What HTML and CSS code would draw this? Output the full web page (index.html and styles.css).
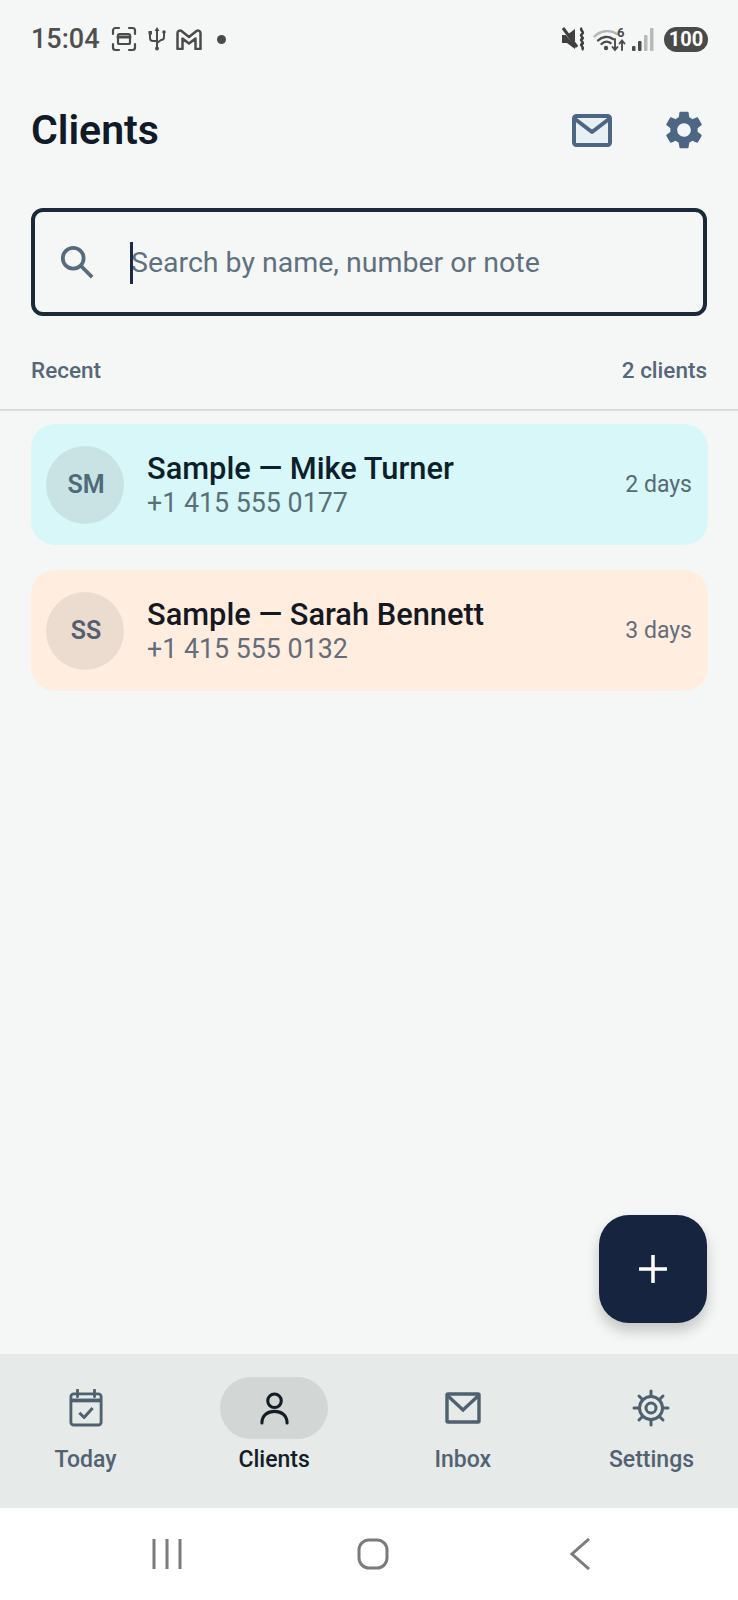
FILE: index.html
```html
<!DOCTYPE html>
<html lang="en">
<head>
  <meta charset="UTF-8">
  <title>Clients</title>
  <link rel="stylesheet" href="styles.css">
</head>
<body>
  <div class="screen">
    <div class="status">
      <div class="status-left">
        <span class="clock">15:04</span>
        <svg class="s-shot" width="26" height="26" viewBox="0 0 26 26" fill="none" stroke="#4b4b4b" stroke-width="2.200" stroke-linecap="round">
          <path d="M2 8V4.500A2.500 2.500 0 0 1 4.500 2H8M18 2h3.500A2.500 2.500 0 0 1 24 4.500V8M24 18v3.500a2.500 2.500 0 0 1-2.500 2.500H18M8 24H4.500A2.500 2.500 0 0 1 2 21.500V18"/>
          <rect x="7" y="8" width="12" height="10" rx="1.500"/>
          <path d="M7 11h12" stroke-width="3"/>
        </svg>
        <svg class="s-usb" width="18" height="24" viewBox="0 0 18 24" fill="none" stroke="#4b4b4b" stroke-width="2">
          <path d="M9 3v19M2 7v4c0 2 1 3 3 3h4M16 6v4c0 2-1 3-3 3l-4 3"/>
          <path d="M9 0l2.500 4h-5z" fill="#4b4b4b" stroke="none"/>
          <rect x="0.500" y="4" width="3.500" height="3.500" fill="#4b4b4b" stroke="none"/>
          <circle cx="16" cy="5" r="1.800" fill="#4b4b4b" stroke="none"/>
          <circle cx="9" cy="21.500" r="2" fill="#4b4b4b" stroke="none"/>
        </svg>
        <svg class="s-gmail" width="26" height="21" viewBox="0 0 26 21" fill="none" stroke="#4b4b4b" stroke-width="2.500" stroke-linejoin="round">
          <path d="M1.500 4a2.500 2.500 0 0 1 4-2L13 8l7.500-6a2.500 2.500 0 0 1 4 2v16h-5V9.500L13 14.500 6.500 9.500V20h-5z"/>
        </svg>
        <span class="s-dot"></span>
      </div>
      <div class="status-right">
        <svg width="25" height="24" viewBox="0 0 25 24" fill="none" stroke="#3f3f3f">
          <path d="M1 8h5l8-6v20l-8-6H1z" fill="#3f3f3f" stroke="none"/>
          <path d="M0.500 1.500L16 19" stroke="#f4f7f5" stroke-width="2.500"/>
          <path d="M2 1l14 19" stroke-width="3"/>
          <path d="M21 1c-3 2 3 4 0 6s3 4 0 5 3 4 0 5 3 3 0 6" stroke-width="2.500"/>
        </svg>
        <svg class="s-wifi" width="32" height="25" viewBox="0 0 32 25" fill="none" stroke-linecap="round">
          <path d="M1.500 9.500C7 4 17 2 24 7" stroke="#b5b5b5" stroke-width="2.400"/>
          <path d="M5 13.500c4-4 10-5 15-1.500" stroke="#4b4b4b" stroke-width="2.400"/>
          <path d="M8.500 17c2.500-2.500 6-3 9-1" stroke="#4b4b4b" stroke-width="2.400"/>
          <circle cx="13" cy="21" r="2.200" fill="#4b4b4b"/>
          <path d="M22 12v11M19.500 20l2.500 3 2.500-3M29 23V14M26.500 16.500L29 13.500l2.500 3" stroke="#4b4b4b" stroke-width="1.900"/>
          <text x="24" y="10" class="wifi-six">6</text>
        </svg>
        <svg class="s-signal" width="22" height="24" viewBox="0 0 22 24">
          <rect x="0" y="19" width="3.500" height="5" rx="1" fill="#4b4b4b"/>
          <rect x="6" y="14" width="3.500" height="10" rx="1" fill="#4b4b4b"/>
          <rect x="12" y="8" width="3.500" height="16" rx="1" fill="#b8b8b8"/>
          <rect x="18" y="1" width="3.500" height="23" rx="1" fill="#b8b8b8"/>
        </svg>
        <span class="battery">100</span>
      </div>
    </div>

    <header class="top">
      <h1>Clients</h1>
      <div class="top-icons">
        <svg width="40" height="33" viewBox="0 0 40 33" fill="none" stroke="#4c6684" stroke-width="4" stroke-linejoin="round">
          <rect x="2" y="2" width="36" height="29" rx="2.500" fill="#e9f0f4"/>
          <path d="M3 5l17 13L37 5"/>
        </svg>
        <svg width="38" height="38" viewBox="2 2 20 20">
          <path fill="#4c6684" d="M19.140 12.940c.04-.3.060-.61.060-.94 0-.32-.020-.64-.070-.94l2.030-1.580a.49.49 0 0 0 .12-.61l-1.920-3.320a.49.49 0 0 0-.59-.22l-2.390.96c-.5-.38-1.030-.7-1.620-.94l-.36-2.540a.484.484 0 0 0-.48-.41h-3.840c-.24 0-.43.170-.47.410l-.36 2.540c-.59.24-1.130.57-1.620.94l-2.390-.96c-.22-.08-.47 0-.59.220L2.740 8.870c-.12.210-.08.47.12.610l2.030 1.580c-.05.3-.09.63-.09.94s.020.64.070.94l-2.030 1.580a.49.49 0 0 0-.12.610l1.920 3.320c.12.220.37.290.59.220l2.390-.96c.5.38 1.030.7 1.620.94l.36 2.540c.05.24.24.410.48.410h3.840c.24 0 .44-.17.47-.41l.36-2.540c.59-.24 1.130-.56 1.620-.94l2.390.96c.22.080.47 0 .59-.22l1.920-3.320c.12-.22.070-.47-.12-.61l-2.010-1.580zM12 15.600A3.610 3.610 0 0 1 8.400 12c0-1.980 1.620-3.600 3.600-3.600s3.600 1.620 3.600 3.600-1.620 3.600-3.600 3.600z"/>
        </svg>
      </div>
    </header>

    <div class="search">
      <svg width="34" height="34" viewBox="0 0 36 36" fill="none" stroke="#566b7d" stroke-width="4">
        <circle cx="14" cy="14" r="11"/>
        <path d="M22 22l12 12"/>
      </svg>
      <div class="search-field">
        <span class="caret"></span>
        <span class="placeholder">Search by name, number or note</span>
      </div>
    </div>

    <div class="list-head">
      <span>Recent</span>
      <span>2 clients</span>
    </div>

    <main class="list">
      <div class="card card-blue">
        <div class="avatar">SM</div>
        <div class="card-info">
          <div class="card-name">Sample — Mike Turner</div>
          <div class="card-phone">+1 415 555 0177</div>
        </div>
        <div class="card-days">2 days</div>
      </div>
      <div class="card card-peach">
        <div class="avatar">SS</div>
        <div class="card-info">
          <div class="card-name">Sample — Sarah Bennett</div>
          <div class="card-phone">+1 415 555 0132</div>
        </div>
        <div class="card-days">3 days</div>
      </div>
    </main>

    <button class="fab">
      <svg width="28" height="28" viewBox="0 0 28 28" stroke="#fff" stroke-width="3.500"><path d="M14 0v28M0 14h28"/></svg>
    </button>

    <nav class="tabs">
      <div class="tab">
        <div class="tab-icon">
          <svg width="34" height="38" viewBox="0 0 36 40" fill="none" stroke="#4f6071" stroke-width="3" stroke-linejoin="round">
            <rect x="2" y="5" width="32" height="33" rx="3"/>
            <path d="M2 12h32" stroke-width="4"/>
            <path d="M9 1v7M27 1v7" stroke-linecap="round"/>
            <path d="M11 25l5 5 9-10" stroke-width="3.200"/>
          </svg>
        </div>
        <span>Today</span>
      </div>
      <div class="tab tab-on">
        <div class="tab-icon">
          <svg width="29" height="33" viewBox="0 0 30 34" fill="none" stroke="#141c26" stroke-width="3.200" stroke-linecap="round">
            <circle cx="15" cy="9" r="7"/>
            <path d="M2 32c0-8 6-12 13-12s13 4 13 12"/>
          </svg>
        </div>
        <span>Clients</span>
      </div>
      <div class="tab">
        <div class="tab-icon">
          <svg width="36" height="32" viewBox="0 0 36 32" fill="none" stroke="#4f6071" stroke-width="3.400">
            <rect x="2" y="2" width="32" height="28" rx="1"/>
            <path d="M3 4l15 14L33 4"/>
          </svg>
        </div>
        <span>Inbox</span>
      </div>
      <div class="tab">
        <div class="tab-icon">
          <svg width="38" height="38" viewBox="0 0 38 38" fill="none" stroke="#4f6071" stroke-width="3" stroke-linecap="round">
            <circle cx="19" cy="19" r="11.500"/>
            <circle cx="19" cy="19" r="5"/>
            <path d="M19 2v5M19 31v5M2 19h5M31 19h5M7 7l3.500 3.500M27.500 27.500L31 31M7 31l3.500-3.500M27.500 10.500L31 7"/>
          </svg>
        </div>
        <span>Settings</span>
      </div>
    </nav>

    <div class="sysnav">
      <svg width="30" height="30" viewBox="0 0 30 30" stroke="#7b7b7b" stroke-width="3"><path d="M2 0v30M15 0v30M28 0v30"/></svg>
      <svg class="sys-home" width="32" height="32" viewBox="0 0 32 32" fill="none" stroke="#7b7b7b" stroke-width="3"><rect x="2" y="2" width="28" height="28" rx="10"/></svg>
      <svg class="sys-back" width="20" height="32" viewBox="0 0 20 32" fill="none" stroke="#7b7b7b" stroke-width="3"><path d="M19 1L2 16l17 15"/></svg>
    </div>
  </div>
</body>
</html>
```

FILE: styles.css
```css
* {
  box-sizing: border-box;
}

body {
  margin: 0;
  font-family: Roboto, "Liberation Sans", sans-serif;
  background-color: #f4f7f5;
}

.screen {
  position: relative;
  width: 738px;
  height: 1600px;
  display: flex;
  flex-direction: column;
  overflow: hidden;
}

/* status bar */
.status {
  height: 78px;
  padding: 0 30px 0 31px;
  display: flex;
  justify-content: space-between;
  align-items: center;
}

.status-left,
.status-right {
  display: flex;
  align-items: center;
}

.clock {
  font-size: 27px;
  font-weight: 500;
  color: #4f4f4f;
  width: 80px;
}

.s-usb {
  margin-left: 11px;
}

.s-gmail {
  margin-left: 10px;
}

.s-dot {
  width: 9px;
  height: 9px;
  margin-left: 15px;
  border-radius: 50%;
  background-color: #4b4b4b;
}

.s-wifi {
  margin-left: 7px;
  overflow: visible;
}

.wifi-six {
  font-family: Roboto, sans-serif;
  font-size: 13px;
  font-weight: 700;
  fill: #4b4b4b;
}

.s-signal {
  margin-left: 7px;
}

.battery {
  margin-left: 10px;
  width: 44px;
  height: 25px;
  border-radius: 13px;
  background-color: #4a4a4a;
  color: #fff;
  font-size: 20px;
  font-weight: 700;
  line-height: 25px;
  text-align: center;
}

/* header */
.top {
  height: 60px;
  margin-top: 22px;
  padding: 0 35px 0 31px;
  display: flex;
  justify-content: space-between;
  align-items: center;
}

h1 {
  margin: 0;
  font-size: 41px;
  font-weight: 600;
  color: #101a28;
}

.top-icons {
  display: flex;
  align-items: center;
  gap: 53px;
}

/* search */
.search {
  margin: 48px 31px 0;
  height: 108px;
  padding: 0 25px;
  display: flex;
  align-items: center;
  border: 4px solid #1b2a3a;
  border-radius: 12px;
}

.search-field {
  margin-left: 37px;
  display: flex;
  align-items: center;
  position: relative;
}

.caret {
  position: absolute;
  left: -1px;
  top: -4px;
  width: 3px;
  height: 42px;
  background-color: #1b2a4a;
}

.placeholder {
  font-size: 28.500px;
  color: #5f7180;
}

.list-head {
  margin-top: 40px;
  padding: 0 31px;
  display: flex;
  justify-content: space-between;
  font-size: 22.500px;
  font-weight: 500;
  color: #566778;
  height: 28px;
  line-height: 28px;
}

/* client cards */
.list {
  flex: 1;
  margin-top: 25px;
  border-top: 2px solid #d9dcd8;
  padding: 13px 30px 0 31px;
  display: flex;
  flex-direction: column;
  gap: 25px;
}

.card {
  height: 121px;
  padding: 0 16px 0 15px;
  display: flex;
  align-items: center;
  border-radius: 24px;
}

.card-blue {
  background-color: #d7f7f8;
  color: #0d1f2b;
}

.card-peach {
  background-color: #ffeee0;
  color: #15181f;
}

.avatar {
  width: 78px;
  height: 78px;
  padding-left: 2px;
  border-radius: 50%;
  display: flex;
  align-items: center;
  justify-content: center;
  font-size: 25px;
  font-weight: 600;
  color: #4f6a78;
}

.card-blue .avatar {
  background-color: #c9e3e4;
}

.card-peach .avatar {
  background-color: #ecdcd0;
  color: #565f70;
}

.card-info {
  flex: 1;
  margin-left: 23px;
}

.card-name {
  font-size: 30.800px;
  font-weight: 500;
  line-height: 36px;
}

.card-phone {
  font-size: 26.800px;
  line-height: 32px;
  color: #5a7079;
}

.card-peach .card-phone,
.card-peach .card-days {
  color: #666c78;
}

.card-days {
  font-size: 23px;
  color: #566a74;
}

/* add button */
.fab {
  position: absolute;
  left: 599px;
  top: 1215px;
  width: 108px;
  height: 108px;
  padding: 0;
  display: flex;
  align-items: center;
  justify-content: center;
  border: 0;
  border-radius: 30px;
  background-color: #16243f;
  box-shadow: 0 8px 14px rgba(0, 0, 0, 0.2);
}

/* bottom tabs */
.tabs {
  height: 154px;
  padding: 23px 8px 0 7px;
  display: flex;
  justify-content: space-between;
  background-color: #e6eae8;
}

.tab {
  width: 157px;
  display: flex;
  flex-direction: column;
  align-items: center;
  font-size: 23px;
  font-weight: 500;
  color: #526272;
}

.tab-icon {
  width: 108px;
  height: 62px;
  margin-bottom: 7px;
  display: flex;
  align-items: center;
  justify-content: center;
  border-radius: 31px;
}

.tab-on {
  color: #141c26;
}

.tab-on .tab-icon {
  background-color: #d2d7d5;
}

.sysnav {
  height: 92px;
  padding-left: 152px;
  display: flex;
  align-items: center;
  background-color: #fff;
}

.sys-home {
  margin-left: 175px;
}

.sys-back {
  margin-left: 181px;
}
```
